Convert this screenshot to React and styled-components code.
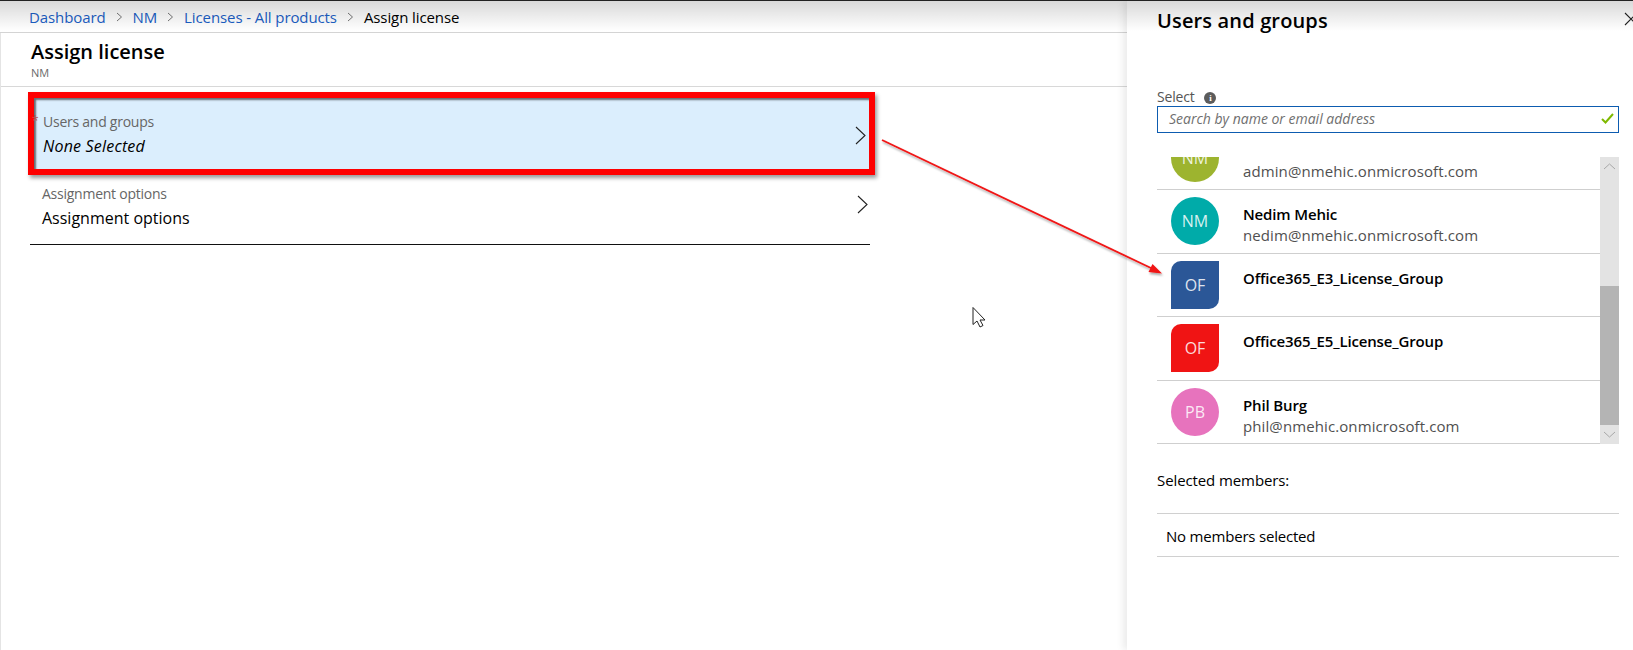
import React from 'react';
import styled, { createGlobalStyle } from 'styled-components';

const Global = createGlobalStyle`
  html, body { margin: 0; padding: 0; background: #fff; }
  body { width: 1633px; height: 650px; overflow: hidden; font-family: "Open Sans", "Noto Sans", "Liberation Sans", sans-serif; color: #000; }
`;

const Page = styled.div`
  position: relative;
  width: 1633px;
  height: 650px;
  display: flex;
  overflow: hidden;
  background: #fff;
`;
const TopShade = styled.div`
  position: absolute;
  inset: 0 0 auto 0;
  height: 30px;
  border-top: 1px solid #222;
  background: linear-gradient(rgba(0,0,0,.15), rgba(0,0,0,0));
  pointer-events: none;
  z-index: 5;
`;
const Main = styled.main`
  flex: 1;
  min-width: 0;
  display: flex;
  flex-direction: column;
`;
const Crumbs = styled.nav`
  height: 30px;
  padding: 2px 0 0 29px;
  display: flex;
  align-items: center;
  gap: 10px;
  border-bottom: 1px solid #d4d4d4;
  font-size: 15px;
  letter-spacing: -0.1px;
`;
const Crumb = styled.span`
  color: ${p => (p.$current ? '#000' : '#1b60c6')};
`;
const Body = styled.div`
  flex: 1;
  border-left: 1px solid #e4e4e4;
  display: flex;
  flex-direction: column;
`;
const Header = styled.header`
  height: 53px;
  padding-left: 30px;
  border-bottom: 1px solid #d8d8d8;
  display: flex;
  flex-direction: column;
  justify-content: flex-start;
`;
const Title = styled.h1`
  margin: 6px 0 0;
  font-size: 20px;
  line-height: 26px;
  font-weight: 600;
`;
const Sub = styled.div`
  margin-top: 1px;
  font-size: 11px;
  line-height: 14px;
  color: #6a6a6a;
`;
const Rows = styled.div`
  margin: 5px 0 0 27px;
  width: 847px;
`;
const HighlightRow = styled.div`
  position: relative;
  height: 83px;
  box-sizing: border-box;
  border: 6px solid #fe0000;
  background: #dbeefd;
  box-shadow: 2px 3px 4px rgba(0,0,0,.4), inset 2px 2px 2px rgba(0,0,0,.55);
  display: flex;
  align-items: center;
  justify-content: space-between;
  padding: 3px 3px 0 9px;
`;
const PlainRow = styled.div`
  width: 840px;
  margin-left: 2px;
  height: 70px;
  box-sizing: border-box;
  border-bottom: 1px solid #111;
  display: flex;
  align-items: center;
  justify-content: space-between;
  padding: 0 2px 4px 12px;
  svg { margin-bottom: 6px; }
`;
const RowText = styled.div`
  display: flex;
  flex-direction: column;
`;
const RowLabel = styled.span`
  font-size: 14px;
  line-height: 18px;
  color: #666;
  letter-spacing: -0.25px;
`;
const RowValue = styled.span`
  margin-top: 3px;
  font-size: 16px;
  line-height: 24px;
  letter-spacing: ${p => (p.$italic ? '0.2px' : '0')};
  font-style: ${p => (p.$italic ? 'italic' : 'normal')};
`;
const Asterisk = styled.span`
  position: absolute;
  left: -2px;
  top: 17px;
  font-size: 12px;
  line-height: 12px;
  color: #b85050;
`;
const Chevron = styled.svg`
  width: 11px;
  height: 19px;
  fill: none;
  stroke: #222;
  stroke-width: 1.1;
  flex: none;
`;
const Panel = styled.aside`
  width: 506px;
  flex: none;
  position: relative;
  z-index: 2;
  background: #fff;
  box-shadow: -4px 0 7px rgba(0,0,0,.08);
  padding: 8px 14px 0 30px;
  box-sizing: border-box;
  display: flex;
  flex-direction: column;
`;
const PanelTitle = styled.h2`
  margin: 0;
  font-size: 20px;
  line-height: 26px;
  font-weight: 600;
  letter-spacing: 0.15px;
`;
const Close = styled.svg`
  position: absolute;
  left: 497px;
  top: 12px;
  width: 14px;
  height: 14px;
  stroke: #222;
  stroke-width: 1.1;
`;
const SelectLabel = styled.label`
  margin-top: 54px;
  display: flex;
  align-items: center;
  gap: 10px;
  font-size: 14px;
  line-height: 18px;
  color: #555;
  letter-spacing: -0.2px;
`;
const InfoDot = styled.span`
  width: 12px;
  height: 12px;
  border-radius: 50%;
  background: #5c5c5c;
  color: #fff;
  font: bold 9px/12px "Liberation Serif", serif;
  text-align: center;
  margin-top: 2px;
`;
const SearchBox = styled.div`
  height: 27px;
  box-sizing: border-box;
  border: 1px solid #0d5cb0;
  display: flex;
  align-items: center;
  justify-content: space-between;
  padding: 0 4px 2px 11px;
`;
const Placeholder = styled.span`
  font-size: 14px;
  font-style: italic;
  color: #6f6f6f;
`;
const Check = styled.svg`
  width: 13px;
  height: 11px;
  fill: none;
  stroke: #7fb900;
  stroke-width: 2;
`;
const ListWrap = styled.div`
  margin-top: 24px;
  display: flex;
  height: 287px;
`;
const List = styled.div`
  flex: 1;
  min-width: 0;
  display: flex;
  flex-direction: column;
`;
const Row = styled.div`
  height: ${p => p.$h}px;
  box-sizing: border-box;
  flex: none;
  overflow: hidden;
  border-bottom: 1.5px solid #cfcfcf;
  display: flex;
  align-items: ${p => (p.$clipped ? 'flex-end' : 'flex-start')};
  padding: ${p => (p.$clipped ? '0 0 7px 14px' : '7px 0 0 14px')};
  gap: 24px;
`;
const Avatar = styled.div`
  width: 48px;
  height: 48px;
  flex: none;
  background: ${p => p.$bg};
  border-radius: ${p => (p.$square ? '10px 0 10px 0' : '50%')};
  color: rgba(255,255,255,.85);
  font-size: 16px;
  display: flex;
  align-items: center;
  justify-content: center;
`;
const Person = styled.div`
  display: flex;
  flex-direction: column;
  padding-top: ${p => (p.$clipped ? 0 : 7)}px;
`;
const Name = styled.span`
  font-size: 15px;
  line-height: 21px;
  font-weight: 600;
  letter-spacing: -0.15px;
`;
const Mail = styled.span`
  font-size: 15px;
  line-height: 21px;
  font-weight: 500;
  color: #505050;
  letter-spacing: 0.1px;
`;
const Scroll = styled.div`
  width: 19px;
  flex: none;
  background: #e3e3e3;
  display: flex;
  flex-direction: column;
  justify-content: space-between;
  align-items: center;
  position: relative;
`;
const ScrollArrow = styled.svg`
  width: 19px;
  height: 19px;
  fill: none;
  stroke: #a8a8a8;
  stroke-width: 1;
  flex: none;
`;
const Thumb = styled.div`
  position: absolute;
  left: 0;
  right: 0;
  top: 129px;
  height: 139px;
  background: #b4b4b4;
`;
const SelectedLabel = styled.div`
  margin-top: 26px;
  font-size: 15px;
  line-height: 20px;
  letter-spacing: -0.1px;
  height: 44px;
  box-sizing: border-box;
  border-bottom: 1.5px solid #d0d0d0;
`;
const NoMembers = styled.div`
  height: 43px;
  box-sizing: border-box;
  padding: 2px 0 0 9px;
  display: flex;
  align-items: center;
  font-size: 15px;
  letter-spacing: -0.2px;
  border-bottom: 1.5px solid #d0d0d0;
`;
const Overlay = styled.svg`
  position: absolute;
  inset: 0;
  width: 1633px;
  height: 650px;
  pointer-events: none;
  z-index: 4;
`;

const Sep = () => (
  <svg width="7" height="10" viewBox="0 0 7 10" fill="none" stroke="#777" strokeWidth="1"><path d="M1 1l4.5 4L1 9" /></svg>
);
const RowChevron = () => (
  <Chevron viewBox="0 0 11 19"><path d="M1 1l9 8.5L1 18" /></Chevron>
);

export default function App() {
  return (
    <Page>
      <Global />
      <Main>
        <Crumbs>
          <Crumb>Dashboard</Crumb><Sep />
          <Crumb>NM</Crumb><Sep />
          <Crumb>Licenses - All products</Crumb><Sep />
          <Crumb $current>Assign license</Crumb>
        </Crumbs>
        <Body>
          <Header>
            <Title>Assign license</Title>
            <Sub>NM</Sub>
          </Header>
          <Rows>
            <HighlightRow>
              <Asterisk>*</Asterisk>
              <RowText>
                <RowLabel>Users and groups</RowLabel>
                <RowValue $italic>None Selected</RowValue>
              </RowText>
              <RowChevron />
            </HighlightRow>
            <PlainRow>
              <RowText>
                <RowLabel>Assignment options</RowLabel>
                <RowValue>Assignment options</RowValue>
              </RowText>
              <RowChevron />
            </PlainRow>
          </Rows>
        </Body>
      </Main>
      <Panel>
        <PanelTitle>Users and groups</PanelTitle>
        <Close viewBox="0 0 14 14"><path d="M1 1l12 12M13 1L1 13" /></Close>
        <SelectLabel>Select <InfoDot>i</InfoDot></SelectLabel>
        <SearchBox>
          <Placeholder>Search by name or email address</Placeholder>
          <Check viewBox="0 0 13 11"><path d="M1 6l3.5 3.5L12 1" /></Check>
        </SearchBox>
        <ListWrap>
          <List>
            <Row $h={33} $clipped>
              <Avatar $bg="#9db42f">NM</Avatar>
              <Person $clipped><Mail>admin@nmehic.onmicrosoft.com</Mail></Person>
            </Row>
            <Row $h={64}>
              <Avatar $bg="#00aba9">NM</Avatar>
              <Person><Name>Nedim Mehic</Name><Mail>nedim@nmehic.onmicrosoft.com</Mail></Person>
            </Row>
            <Row $h={63}>
              <Avatar $bg="#2b5797" $square>OF</Avatar>
              <Person><Name>Office365_E3_License_Group</Name></Person>
            </Row>
            <Row $h={64}>
              <Avatar $bg="#f01414" $square>OF</Avatar>
              <Person><Name>Office365_E5_License_Group</Name></Person>
            </Row>
            <Row $h={63}>
              <Avatar $bg="#e773bd">PB</Avatar>
              <Person><Name>Phil Burg</Name><Mail>phil@nmehic.onmicrosoft.com</Mail></Person>
            </Row>
          </List>
          <Scroll>
            <ScrollArrow viewBox="0 0 19 19"><path d="M4 12l5.5-5 5.5 5" /></ScrollArrow>
            <Thumb />
            <ScrollArrow viewBox="0 0 19 19"><path d="M4 7l5.5 5 5.5-5" /></ScrollArrow>
          </Scroll>
        </ListWrap>
        <SelectedLabel>Selected members:</SelectedLabel>
        <NoMembers>No members selected</NoMembers>
      </Panel>
      <Overlay viewBox="0 0 1633 650">
        <defs>
          <filter id="s" x="-5%" y="-5%" width="110%" height="115%">
            <feDropShadow dx="1" dy="2" stdDeviation="1.2" floodColor="#000" floodOpacity=".35" />
          </filter>
        </defs>
        <g filter="url(#s)">
          <path d="M882 140L1152 268.5" stroke="#f01414" strokeWidth="1.8" fill="none" />
          <path d="M1162 273.5L1148.5 272L1152.5 264Z" fill="#f01414" />
        </g>
        <path d="M973 307.5v17l4-3.5 3 6 3-1.5-3-5.5h5z" fill="#fff" stroke="#222" strokeWidth="1" />
      </Overlay>
      <TopShade />
    </Page>
  );
}
